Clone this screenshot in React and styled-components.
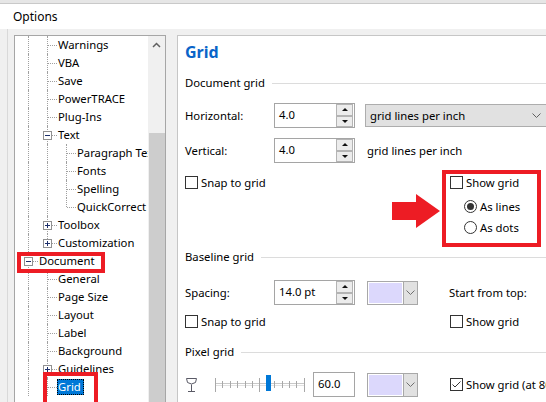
import React from "react";
import styled, { createGlobalStyle, css } from "styled-components";

const GlobalStyle = createGlobalStyle`
  html, body { margin: 0; padding: 0; }
  body {
    width: 546px;
    height: 402px;
    overflow: hidden;
    background: #f0f0f0;
    color: #000;
    font-family: "Noto Sans", "Open Sans", sans-serif;
    font-size: 11.3px;
  }
`;

const Window = styled.div`
  width: 546px;
  height: 402px;
  overflow: hidden;
  display: flex;
  flex-direction: column;
`;

const TopStrip = styled.div`
  height: 3px;
  flex: none;
  background: #e6e6e6;
  border-bottom: 1px solid #c9c9c9;
`;

const TitleBar = styled.div`
  height: 25px;
  flex: none;
  background: #fff;
  display: flex;
  align-items: center;
  padding-left: 13px;
  font-size: 12px;
`;

const Body = styled.div`
  flex: 1;
  min-height: 0;
  display: flex;
  margin-left: 7px;
  padding: 6px 0 0 6px;
  border-left: 1px solid #d9d9d9;
  overflow: hidden;
`;

/* ---------- tree ---------- */

const Tree = styled.div`
  flex: none;
  width: 152px;
  height: 380px;
  box-sizing: border-box;
  border: 1px solid #a6a6a6;
  background: #fff;
  display: flex;
  overflow: hidden;
`;

const TreeList = styled.div`
  flex: 1;
  min-width: 0;
  overflow: hidden;
  padding-left: 4px;
`;

const Row = styled.div`
  position: relative;
  height: 18px;
  display: flex;
  white-space: nowrap;
`;

const dotV = css`
  content: "";
  position: absolute;
  left: 9px;
  top: 0;
  border-left: 1px dotted #a0a0a0;
`;

const Guide = styled.span`
  flex: none;
  width: 19px;
  position: relative;
  ${(p) => p.$on && css`&::before { ${dotV}; bottom: 0; }`}
`;

const Joint = styled.span`
  flex: none;
  width: 19px;
  position: relative;
  &::before {
    ${dotV};
    height: ${(p) => (p.$last ? "9px" : "18px")};
  }
  &::after {
    content: "";
    position: absolute;
    left: 10px;
    top: 9px;
    width: 9px;
    border-top: 1px dotted #a0a0a0;
  }
`;

const Expander = styled.span`
  position: absolute;
  z-index: 1;
  left: 5px;
  top: 5px;
  width: 9px;
  height: 9px;
  box-sizing: border-box;
  border: 1px solid #919191;
  background: #fff;
  &::before {
    content: "";
    position: absolute;
    left: 1px;
    top: 3px;
    width: 5px;
    height: 1px;
    background: #1c2f6b;
  }
  ${(p) =>
    p.$plus &&
    css`
      &::after {
        content: "";
        position: absolute;
        left: 3px;
        top: 1px;
        width: 1px;
        height: 5px;
        background: #1c2f6b;
      }
    `}
`;

const NodeLabel = styled.span`
  align-self: center;
  line-height: 16px;
  padding: 0 1px;
  ${(p) =>
    p.$selected &&
    css`
      background: #0078d7;
      color: #fff;
      padding: 0 3px 0 1px;
      outline: 1px dotted #000;
      outline-offset: -1px;
    `}
`;

const Mark = styled.span`
  position: absolute;
  z-index: 2;
  box-sizing: border-box;
  border: 4px solid #ed1c24;
  left: ${(p) => p.$x}px;
  top: ${(p) => p.$y}px;
  width: ${(p) => p.$w}px;
  height: ${(p) => p.$h}px;
`;

const ScrollBar = styled.div`
  flex: none;
  width: 17px;
  background: #f0f0f0;
  display: flex;
  flex-direction: column;
`;

const ScrollBtn = styled.div`
  height: 17px;
  display: flex;
  align-items: center;
  justify-content: center;
`;

const Thumb = styled.div`
  flex: 1;
  margin: 80px 0 0 1px;
  background: #cdcdcd;
`;

const tree = [
  { label: "Warnings", guides: [1] },
  { label: "VBA", guides: [1] },
  { label: "Save", guides: [1] },
  { label: "PowerTRACE", guides: [1] },
  { label: "Plug-Ins", guides: [1] },
  { label: "Text", guides: [1], exp: "-" },
  { label: "Paragraph Text", guides: [1, 1] },
  { label: "Fonts", guides: [1, 1] },
  { label: "Spelling", guides: [1, 1] },
  { label: "QuickCorrect", guides: [1, 1], last: true },
  { label: "Toolbox", guides: [1], exp: "+" },
  { label: "Customization", guides: [1], exp: "+", last: true },
  { label: "Document", guides: [], exp: "-", mark: { x: -2, y: 0, w: 88, h: 21 } },
  { label: "General", guides: [1] },
  { label: "Page Size", guides: [1] },
  { label: "Layout", guides: [1] },
  { label: "Label", guides: [1] },
  { label: "Background", guides: [1] },
  { label: "Guidelines", guides: [1], exp: "+" },
  { label: "Grid", guides: [1], selected: true, mark: { x: 24, y: -6, w: 55, h: 34 } },
];

/* ---------- settings panel ---------- */

const Panel = styled.div`
  flex: none;
  width: 400px;
  height: 380px;
  margin-left: 11px;
  box-sizing: border-box;
  border: 1px solid #c6c6c6;
  background: #fff;
  padding: 6px 0 0 7px;
  white-space: nowrap;
`;

const Title = styled.div`
  font-size: 16px;
  line-height: 20px;
  font-weight: 700;
  color: #0a64c8;
`;

const Section = styled.div`
  display: flex;
  align-items: center;
  gap: 7px;
  line-height: 16px;
  margin-top: ${(p) => p.$mt}px;
  &::after {
    content: "";
    flex: 1;
    height: 1px;
    background: #dcdcdc;
  }
`;

const Line = styled.div`
  display: flex;
  align-items: ${(p) => p.$align || "center"};
  height: ${(p) => (p.$h ? `${p.$h}px` : "auto")};
  margin-top: ${(p) => p.$mt}px;
`;

const Label = styled.span`
  flex: none;
  width: ${(p) => p.$w || 89}px;
`;

const Field = styled.div`
  flex: none;
  width: ${(p) => p.$w || 81}px;
  height: 25px;
  box-sizing: border-box;
  border: 1px solid #a5a5a5;
  background: #fff;
  display: flex;
  align-items: center;
  margin-left: ${(p) => p.$ml || 0}px;
`;

const FieldValue = styled.span`
  flex: 1;
  padding-left: 4px;
  margin-top: -2px;
`;

const Spin = styled.div`
  flex: none;
  width: 17px;
  align-self: stretch;
  margin: 0 1px 0 0;
  display: flex;
  flex-direction: column;
`;

const SpinBtn = styled.div`
  flex: 1;
  background: #ececec;
  border: 1px solid #b4b4b4;
  display: flex;
  align-items: center;
  justify-content: center;
  &::before {
    content: "";
    border-left: 3px solid transparent;
    border-right: 3px solid transparent;
    ${(p) => (p.$down ? "border-top: 3px solid #111;" : "border-bottom: 3px solid #111;")}
  }
`;

const Select = styled.div`
  flex: none;
  width: 190px;
  height: 23px;
  margin-left: 10px;
  box-sizing: border-box;
  background: #e1e1e1;
  border: 1px solid #adadad;
  display: flex;
  align-items: center;
  justify-content: space-between;
  padding: 0 13px 0 4px;
`;

const ColorPick = styled.div`
  flex: none;
  width: 51px;
  height: 24px;
  box-sizing: border-box;
  border: 1px solid #a8a8a8;
  display: flex;
  margin-left: ${(p) => p.$ml || 0}px;
`;

const Swatch = styled.div`
  flex: 1;
  background: #dcd8fc;
  border: 1px solid #fff;
`;

const PickBtn = styled.div`
  flex: none;
  width: 13px;
  background: #e1e1e1;
  border-left: 1px solid #a8a8a8;
  display: flex;
  align-items: center;
  justify-content: center;
`;

const Check = styled.label`
  flex: none;
  display: flex;
  align-items: center;
  gap: 3px;
  height: 16px;
  margin-left: ${(p) => p.$ml || 0}px;
`;

const CheckBox = styled.span`
  width: 13px;
  height: 13px;
  box-sizing: border-box;
  border: 1px solid #333;
  background: #fff;
  display: flex;
`;

const Radio = styled.span`
  width: 13px;
  height: 13px;
  box-sizing: border-box;
  border: 1px solid #333;
  border-radius: 50%;
  background: #fff;
  display: flex;
  align-items: center;
  justify-content: center;
  ${(p) =>
    p.$on &&
    css`
      &::before {
        content: "";
        width: 7px;
        height: 7px;
        border-radius: 50%;
        background: #333;
      }
    `}
`;

const ShowGridBox = styled.div`
  flex: none;
  width: 99px;
  box-sizing: border-box;
  border: 4px solid #ed1c24;
  padding: 0 0 8px 4px;
`;

const RadioRow = styled(Check)`
  margin: ${(p) => p.$mt}px 0 0 14px;
`;

const Chevron = ({ color = "#606060" }) => (
  <svg width="9" height="5" viewBox="0 0 9 5">
    <path d="M0.5 0.5 L4.5 4.5 L8.5 0.5" fill="none" stroke={color} strokeWidth="1" />
  </svg>
);

const Spinner = ({ value, w, ml }) => (
  <Field $w={w} $ml={ml}>
    <FieldValue>{value}</FieldValue>
    <Spin>
      <SpinBtn />
      <SpinBtn $down />
    </Spin>
  </Field>
);

const CheckItem = ({ label, checked, ml }) => (
  <Check $ml={ml}>
    <CheckBox>
      {checked && (
        <svg width="11" height="11" viewBox="0 0 11 11">
          <path d="M1.5 5.5 L4 8 L9.5 2.5" fill="none" stroke="#333" strokeWidth="1" />
        </svg>
      )}
    </CheckBox>
    {label}
  </Check>
);

const Picker = ({ ml }) => (
  <ColorPick $ml={ml}>
    <Swatch />
    <PickBtn>
      <Chevron color="#707070" />
    </PickBtn>
  </ColorPick>
);

const Arrow = () => (
  <svg width="50" height="35" viewBox="0 0 50 35" style={{ flex: "none", marginTop: 24 }}>
    <rect x="0" y="8" width="26" height="18" fill="#ed1c24" />
    <polygon points="24,0 48,17 24,34" fill="#ed1c24" />
  </svg>
);

const Glass = () => (
  <svg width="20" height="16" viewBox="0 0 20 16" style={{ flex: "none" }}>
    <path d="M1.5 1.5 H11.5 L10.5 5.5 Q6.5 8.5 2.5 5.5 Z" fill="none" stroke="#5a5a66" strokeWidth="1" />
    <path d="M6.5 7.5 V14 M3 14.5 H10" fill="none" stroke="#5a5a66" strokeWidth="1" />
  </svg>
);

const Slider = () => {
  const ticks = Array.from({ length: 13 }, (_, i) => 10.5 + Math.round(i * 7.4));
  return (
    <svg width="100" height="25" viewBox="0 0 100 25" style={{ flex: "none" }}>
      <line x1="10" y1="11.5" x2="99" y2="11.5" stroke="#c8c8c8" />
      <line x1="10" y1="13.5" x2="99" y2="13.5" stroke="#e2e2e2" />
      {ticks.map((x, i) => {
        const big = i % 6 === 0;
        return (
          <line
            key={x}
            x1={x}
            x2={x}
            y1={big ? 6 : 9}
            y2={big ? 20 : 16}
            stroke="#a8a8a8"
          />
        );
      })}
      <rect x="61" y="3" width="5" height="16" fill="#0078d7" />
    </svg>
  );
};

export default function App() {
  return (
    <>
      <GlobalStyle />
      <Window>
        <TopStrip />
        <TitleBar>Options</TitleBar>
        <Body>
          <Tree>
            <TreeList>
              {tree.map((n) => (
                <Row key={n.label}>
                  {n.guides.map((g, i) => (
                    <Guide key={i} $on={!!g} />
                  ))}
                  <Joint $last={n.last}>
                    {n.exp && <Expander $plus={n.exp === "+"} />}
                  </Joint>
                  <NodeLabel $selected={n.selected}>{n.label}</NodeLabel>
                  {n.mark && <Mark $x={n.mark.x} $y={n.mark.y} $w={n.mark.w} $h={n.mark.h} />}
                </Row>
              ))}
            </TreeList>
            <ScrollBar>
              <ScrollBtn>
                <svg width="9" height="6" viewBox="0 0 9 6">
                  <path d="M1 5 L4.5 1.5 L8 5" fill="none" stroke="#606060" strokeWidth="1.5" />
                </svg>
              </ScrollBtn>
              <Thumb />
            </ScrollBar>
          </Tree>

          <Panel>
            <Title>Grid</Title>

            <Section $mt={13}>Document grid</Section>
            <Line $h={25} $mt={12}>
              <Label>Horizontal:</Label>
              <Spinner value="4.0" />
              <Select>
                <span>grid lines per inch</span>
                <Chevron />
              </Select>
            </Line>
            <Line $h={25} $mt={10}>
              <Label>Vertical:</Label>
              <Spinner value="4.0" />
              <Label style={{ marginLeft: 12, width: "auto" }}>grid lines per inch</Label>
            </Line>
            <Line $align="flex-start" $mt={7}>
              <Check style={{ width: 207, marginTop: 4 }}>
                <CheckBox />
                Snap to grid
              </Check>
              <Arrow />
              <ShowGridBox>
                <CheckItem label="Show grid" />
                <RadioRow $mt={8}>
                  <Radio $on />
                  As lines
                </RadioRow>
                <RadioRow $mt={5}>
                  <Radio />
                  As dots
                </RadioRow>
              </ShowGridBox>
            </Line>

            <Section $mt={2}>Baseline grid</Section>
            <Line $h={25} $mt={15}>
              <Label>Spacing:</Label>
              <Spinner value="14.0 pt" />
              <Picker ml={12} />
              <Label style={{ marginLeft: 31, width: "auto" }}>Start from top:</Label>
            </Line>
            <Line $mt={8}>
              <Check style={{ width: 265 }}>
                <CheckBox />
                Snap to grid
              </Check>
              <CheckItem label="Show grid" />
            </Line>

            <Section $mt={15}>Pixel grid</Section>
            <Line $h={25} $mt={12}>
              <Glass />
              <Slider />
              <Field $w={42} $ml={8}>
                <FieldValue>60.0</FieldValue>
              </Field>
              <Picker ml={12} />
              <CheckItem label="Show grid (at 800% zoom and higher)" checked ml={32} />
            </Line>
          </Panel>
        </Body>
      </Window>
    </>
  );
}
